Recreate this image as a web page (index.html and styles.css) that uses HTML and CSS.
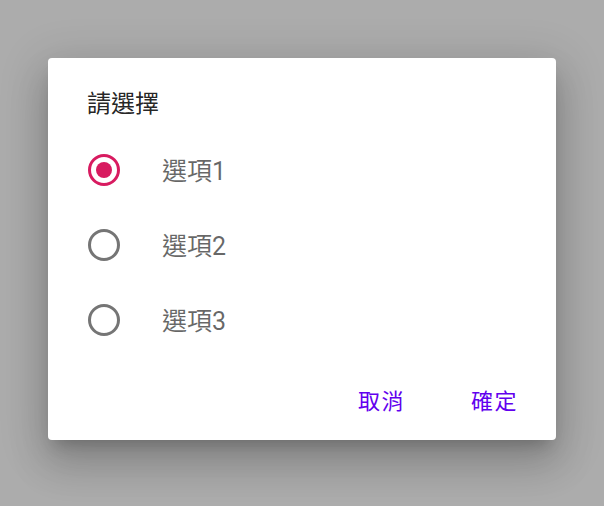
FILE: index.html
```html
<!DOCTYPE html>
<html lang="zh-Hant">
<head>
<meta charset="utf-8">
<link rel="stylesheet" href="styles.css">
</head>
<body>
<div class="dialog">
  <div class="title">請選擇</div>
  <div class="options">
    <div class="option">
      <span class="radio checked"><span class="dot"></span></span>
      <span class="label">選項1</span>
    </div>
    <div class="option">
      <span class="radio"></span>
      <span class="label">選項2</span>
    </div>
    <div class="option">
      <span class="radio"></span>
      <span class="label">選項3</span>
    </div>
  </div>
  <div class="actions">
    <span class="btn">取消</span>
    <span class="btn">確定</span>
  </div>
</div>
</body>
</html>
```
FILE: styles.css
```css
html, body {
  margin: 0;
  padding: 0;
  background: #acacac;
  width: 604px;
  height: 506px;
  overflow: hidden;
  font-family: Roboto, "Noto Sans CJK TC", sans-serif;
}
.dialog {
  box-sizing: border-box;
  width: 508px;
  height: 382px;
  margin: 58px 0 0 48px;
  background: #fff;
  border-radius: 4px;
  box-shadow: 0 11px 15px -7px rgba(0,0,0,.2), 0 24px 38px 3px rgba(0,0,0,.14), 0 9px 46px 8px rgba(0,0,0,.12);
  display: flex;
  flex-direction: column;
}
.title {
  padding: 30px 0 0 39px;
  font-size: 24px;
  line-height: 32px;
  color: rgba(0,0,0,.87);
}
.options {
  display: flex;
  flex-direction: column;
  margin-top: 12px;
}
.option {
  display: flex;
  align-items: center;
  height: 75px;
  padding-left: 40px;
}
.radio {
  box-sizing: border-box;
  width: 32px;
  height: 32px;
  border: 3px solid #757575;
  border-radius: 50%;
  display: flex;
  align-items: center;
  justify-content: center;
}
.radio.checked {
  border-color: #d81b60;
}
.dot {
  width: 16px;
  height: 16px;
  border-radius: 50%;
  background: #d81b60;
}
.label {
  margin-left: 42px;
  padding-top: 4px;
  font-size: 25px;
  line-height: 30px;
  color: rgba(0,0,0,.6);
}
.actions {
  display: flex;
  justify-content: flex-end;
  gap: 66px;
  padding: 29px 38px 0 0;
}
.btn {
  font-size: 22px;
  letter-spacing: 1.5px;
  color: #6200ee;
  line-height: 32px;
}
```
